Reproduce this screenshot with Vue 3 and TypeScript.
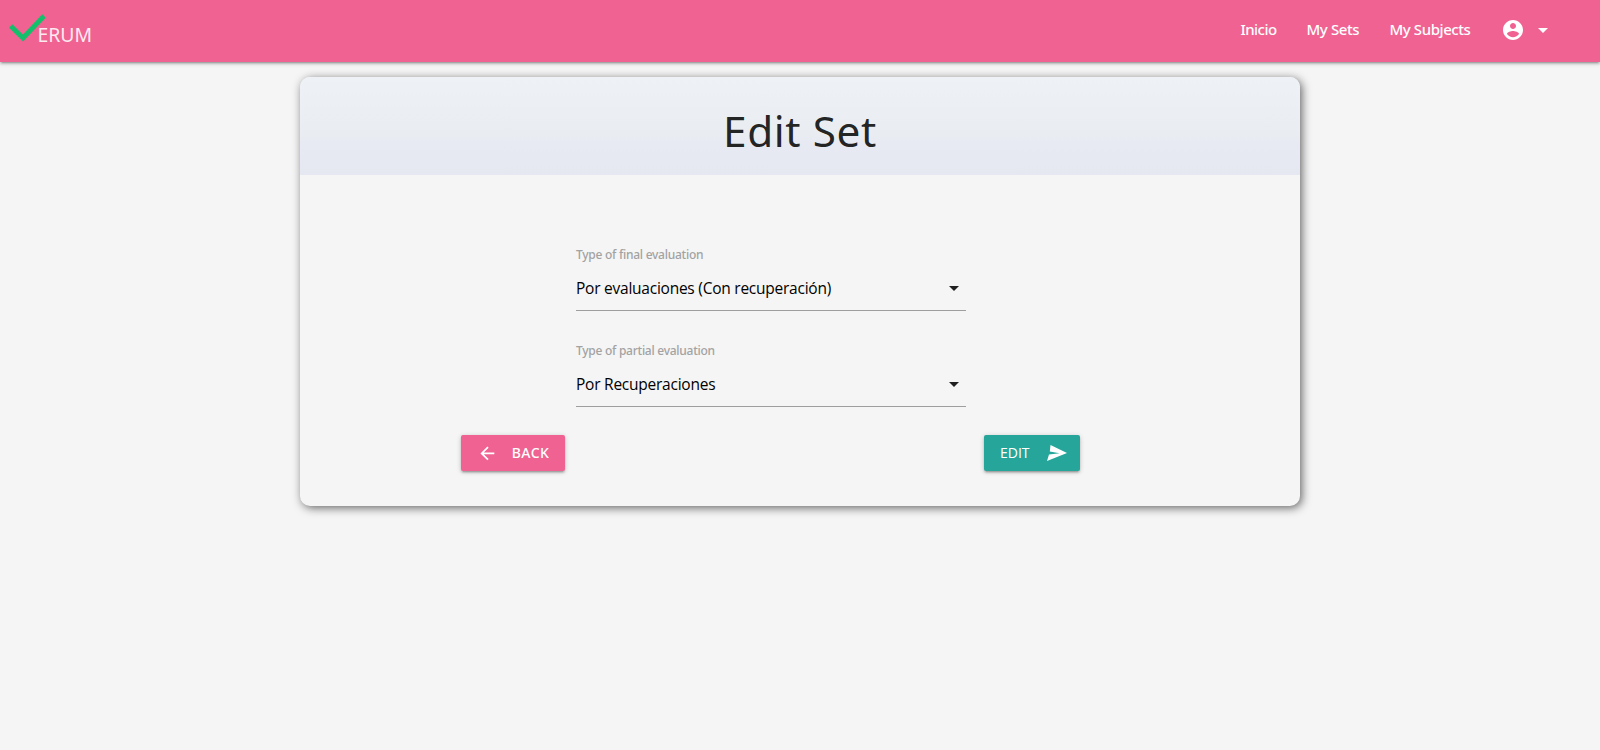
<script setup lang="ts">
interface NavLink {
  label: string
  size: string
}

interface Field {
  label: string
  value: string
}

const links: NavLink[] = [
  { label: 'Inicio', size: 'short' },
  { label: 'My Sets', size: 'medium' },
  { label: 'My Subjects', size: 'long' },
]

const fields: Field[] = [
  { label: 'Type of final evaluation', value: 'Por evaluaciones (Con recuperación)' },
  { label: 'Type of partial evaluation', value: 'Por Recuperaciones' },
]
</script>

<template>
  <div class="page">
    <nav class="navbar">
      <a class="brand">
        <svg class="check" viewBox="0 0 36 28">
          <path d="M1.6 12 14 24 35 2" />
        </svg>
        <span class="brand-name">ERUM</span>
      </a>
      <div class="links">
        <a v-for="link in links" :key="link.label" class="link" :class="link.size">{{ link.label }}</a>
        <a class="account">
          <svg class="icon" viewBox="0 0 24 24">
            <path d="M12 2C6.48 2 2 6.48 2 12s4.48 10 10 10 10-4.48 10-10S17.52 2 12 2zm0 3c1.66 0 3 1.34 3 3s-1.34 3-3 3-3-1.34-3-3 1.34-3 3-3zm0 14.2c-2.5 0-4.71-1.28-6-3.22.03-1.99 4-3.08 6-3.08 1.99 0 5.97 1.09 6 3.08-1.29 1.94-3.5 3.22-6 3.22z" />
          </svg>
          <svg class="icon" viewBox="0 0 24 24"><path d="M7 10l5 5 5-5z" /></svg>
        </a>
      </div>
    </nav>

    <main class="card">
      <header class="card-header"><h1>Edit Set</h1></header>
      <form class="form">
        <div v-for="field in fields" :key="field.label" class="field">
          <label>{{ field.label }}</label>
          <div class="select">
            <span>{{ field.value }}</span>
            <svg class="caret" viewBox="0 0 24 24"><path d="M7 10l5 5 5-5z" /></svg>
          </div>
        </div>
        <div class="actions">
          <button type="button" class="btn back">
            <svg class="arrow" viewBox="0 0 24 24">
              <path d="M20 11H7.83l5.59-5.59L12 4l-8 8 8 8 1.41-1.41L7.83 13H20v-2z" />
            </svg>
            <span>BACK</span>
          </button>
          <button type="button" class="btn edit">
            <span>EDIT</span>
            <svg class="send" viewBox="0 0 20 16">
              <path d="M3.5 0 20 8 0 16 2 9.5 12.5 8.2 2.8 6.6z" />
            </svg>
          </button>
        </div>
      </form>
    </main>
  </div>
</template>

<style>
body {
  background: #f5f5f5;
}
</style>

<style scoped>
.page {
  min-height: 750px;
  background: #f5f5f5;
  font-family: "Noto Sans", sans-serif;
  color: rgba(0, 0, 0, 0.87);
}

svg {
  display: block;
  flex: none;
  fill: currentColor;
}

.navbar {
  display: flex;
  justify-content: space-between;
  height: 62px;
  padding: 0 45px 0 9px;
  box-sizing: border-box;
  background: #f06292;
  color: #fff;
  box-shadow: 0 2px 2px 0 rgba(0, 0, 0, 0.14), 0 3px 1px -2px rgba(0, 0, 0, 0.12), 0 1px 5px 0 rgba(0, 0, 0, 0.2);
}

.brand {
  display: flex;
  align-items: flex-start;
}

.check {
  width: 36px;
  height: 28px;
  margin-top: 14px;
  fill: none;
  stroke: #13bf6b;
  stroke-width: 4.8;
}

.brand-name {
  margin: 21px 0 0 -7.5px;
  font-size: 19.4px;
  line-height: 27px;
  color: #fde9f0;
}

.links {
  display: flex;
  height: 60px;
}

.link {
  box-sizing: border-box;
  padding: 0 14.5px 0 15.5px;
  font-size: 15px;
  font-weight: 500;
  line-height: 58px;
  white-space: nowrap;
}

.short {
  width: 66px;
  letter-spacing: -0.55px;
}

.medium {
  width: 83px;
  letter-spacing: -0.4px;
}

.long {
  width: 112px;
  letter-spacing: -0.42px;
}

.account {
  display: flex;
  align-items: center;
  gap: 6px;
  padding-left: 15px;
}

.icon {
  width: 24px;
  height: 24px;
}

.card {
  width: 1000px;
  height: 429px;
  margin: 15px auto 0;
  border-radius: 10px;
  box-shadow: 2px 2px 10px #666;
}

.card-header {
  height: 98px;
  border-radius: 10px 10px 0 0;
  background: linear-gradient(#eef2f7, #e9edf1 60%, #e7eaf3 66%, #e5e8f1);
}

h1 {
  margin: 0;
  padding-top: 3px;
  font-size: 42.3px;
  font-weight: 400;
  line-height: 102px;
  letter-spacing: 0.6px;
  text-align: center;
}

.form {
  padding: 72px 161px 0;
}

.field {
  width: 390px;
  height: 96px;
  margin-left: 115px;
}

label {
  display: block;
  font-size: 12px;
  font-weight: 500;
  line-height: 16px;
  letter-spacing: -0.26px;
  color: #a2a2a2;
}

.select {
  display: flex;
  justify-content: space-between;
  align-items: center;
  height: 45px;
  margin-top: 2px;
  border-bottom: 1px solid #9e9e9e;
  font-family: "Open Sans", sans-serif;
  font-size: 15.5px;
  font-weight: 400;
  letter-spacing: -0.24px;
  color: #000;
}

.caret {
  width: 24px;
  height: 24px;
  color: rgba(0, 0, 0, 0.87);
}

.actions {
  display: flex;
  justify-content: space-between;
  width: 619px;
  margin-top: -4px;
}

.btn {
  display: flex;
  align-items: center;
  height: 36px;
  padding: 0 0 0 16px;
  border: 0;
  border-radius: 2px;
  color: #fff;
  font-size: 14px;
  line-height: 36px;
  box-shadow: 0 2px 2px 0 rgba(0, 0, 0, 0.14), 0 3px 1px -2px rgba(0, 0, 0, 0.12), 0 1px 5px 0 rgba(0, 0, 0, 0.2);
}

.back {
  gap: 14px;
  width: 104px;
  background: #f06292;
  font-family: "Noto Sans", sans-serif;
  font-weight: 500;
  letter-spacing: 0.4px;
}

.edit {
  gap: 17px;
  width: 96px;
  background: #26a69a;
  font-family: "Open Sans", sans-serif;
}

.arrow {
  width: 20.8px;
  height: 20.8px;
}

.send {
  width: 20px;
  height: 16px;
}
</style>
